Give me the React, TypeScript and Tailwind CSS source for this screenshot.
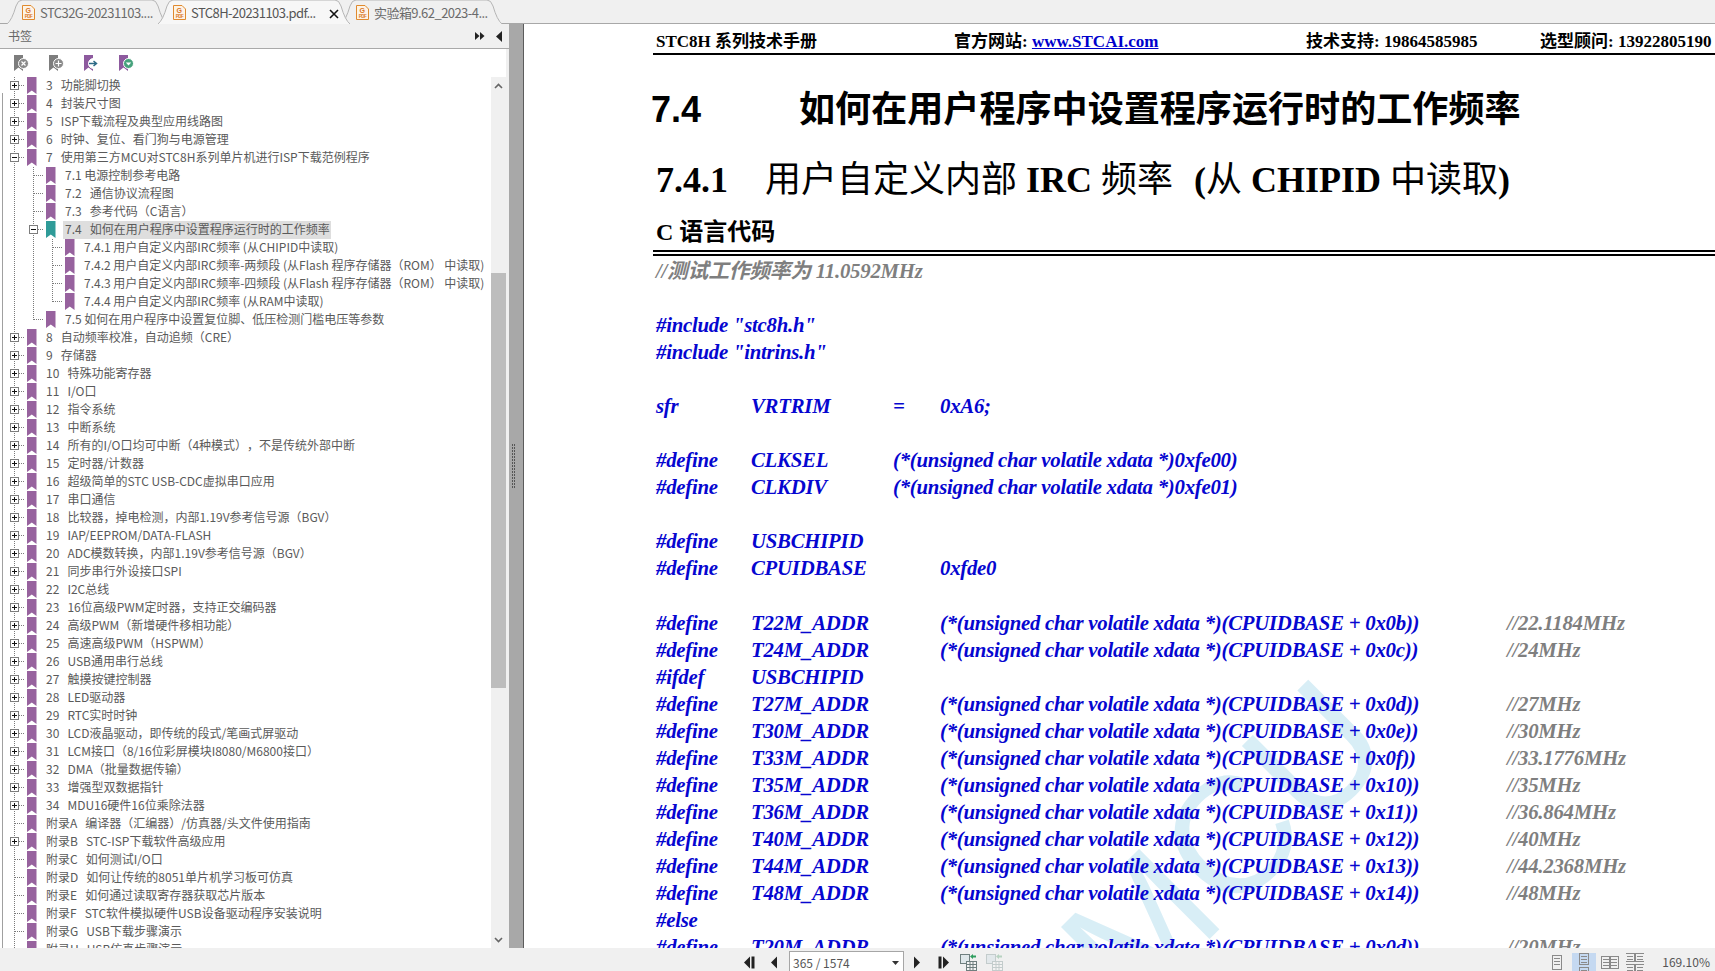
import React from "react";

const uiFont = "font-['Noto_Sans_CJK_SC','Noto_Sans',sans-serif]";
const docFont = "font-['Liberation_Serif','Noto_Sans_CJK_SC',serif]";

type Node = { level: number; text: string; exp?: "+" | "-"; sel?: boolean; last?: boolean };

const top = (text: string, exp: "+" | "-" = "+"): Node => ({ level: 0, text, exp });
const leaf = (text: string): Node => ({ level: 0, text });

const tree: Node[] = [
  top("3   功能脚切换"),
  top("4   封装尺寸图"),
  top("5   ISP下载流程及典型应用线路图"),
  top("6   时钟、复位、看门狗与电源管理"),
  top("7   使用第三方MCU对STC8H系列单片机进行ISP下载范例程序", "-"),
  { level: 1, text: "7.1 电源控制参考电路" },
  { level: 1, text: "7.2   通信协议流程图" },
  { level: 1, text: "7.3   参考代码（C语言）" },
  { level: 1, text: "7.4   如何在用户程序中设置程序运行时的工作频率", exp: "-", sel: true },
  { level: 2, text: "7.4.1 用户自定义内部IRC频率 (从CHIPID中读取)" },
  { level: 2, text: "7.4.2 用户自定义内部IRC频率-两频段 (从Flash 程序存储器（ROM） 中读取)" },
  { level: 2, text: "7.4.3 用户自定义内部IRC频率-四频段 (从Flash 程序存储器（ROM） 中读取)" },
  { level: 2, text: "7.4.4 用户自定义内部IRC频率 (从RAM中读取)", last: true },
  { level: 1, text: "7.5 如何在用户程序中设置复位脚、低压检测门槛电压等参数", last: true },
  top("8   自动频率校准，自动追频（CRE）"),
  top("9   存储器"),
  top("10   特殊功能寄存器"),
  top("11   I/O口"),
  top("12   指令系统"),
  top("13   中断系统"),
  top("14   所有的I/O口均可中断（4种模式），不是传统外部中断"),
  top("15   定时器/计数器"),
  top("16   超级简单的STC USB-CDC虚拟串口应用"),
  top("17   串口通信"),
  top("18   比较器，掉电检测，内部1.19V参考信号源（BGV）"),
  top("19   IAP/EEPROM/DATA-FLASH"),
  top("20   ADC模数转换，内部1.19V参考信号源（BGV）"),
  top("21   同步串行外设接口SPI"),
  top("22   I2C总线"),
  top("23   16位高级PWM定时器，支持正交编码器"),
  top("24   高级PWM（新增硬件移相功能）"),
  top("25   高速高级PWM（HSPWM）"),
  top("26   USB通用串行总线"),
  top("27   触摸按键控制器"),
  top("28   LED驱动器"),
  top("29   RTC实时时钟"),
  top("30   LCD液晶驱动，即传统的段式/笔画式屏驱动"),
  top("31   LCM接口（8/16位彩屏模块I8080/M6800接口）"),
  top("32   DMA（批量数据传输）"),
  top("33   增强型双数据指针"),
  top("34   MDU16硬件16位乘除法器"),
  leaf("附录A   编译器（汇编器）/仿真器/头文件使用指南"),
  top("附录B   STC-ISP下载软件高级应用"),
  leaf("附录C   如何测试I/O口"),
  leaf("附录D   如何让传统的8051单片机学习板可仿真"),
  leaf("附录E   如何通过读取寄存器获取芯片版本"),
  leaf("附录F   STC软件模拟硬件USB设备驱动程序安装说明"),
  leaf("附录G   USB下载步骤演示"),
  leaf("附录H   USB仿真步骤演示"),
];

const expr = (s: string) => `(*(unsigned char volatile xdata *)(CPUIDBASE + ${s}))`;

// kw, name, col3 (starts at "="), col4 (starts at 0x..), comment
type Code = { kw?: string; name?: string; c3?: string; c4?: string; note?: string };
const code: Code[] = [
  { note: "//测试工作频率为 11.0592MHz" },
  {},
  { kw: '#include "stc8h.h"' },
  { kw: '#include "intrins.h"' },
  {},
  { kw: "sfr", name: "VRTRIM", c3: "=", c4: "0xA6;" },
  {},
  { kw: "#define", name: "CLKSEL", c3: "(*(unsigned char volatile xdata *)0xfe00)" },
  { kw: "#define", name: "CLKDIV", c3: "(*(unsigned char volatile xdata *)0xfe01)" },
  {},
  { kw: "#define", name: "USBCHIPID" },
  { kw: "#define", name: "CPUIDBASE", c4: "0xfde0" },
  {},
  { kw: "#define", name: "T22M_ADDR", c4: expr("0x0b"), note: "//22.1184MHz" },
  { kw: "#define", name: "T24M_ADDR", c4: expr("0x0c"), note: "//24MHz" },
  { kw: "#ifdef", name: "USBCHIPID" },
  { kw: "#define", name: "T27M_ADDR", c4: expr("0x0d"), note: "//27MHz" },
  { kw: "#define", name: "T30M_ADDR", c4: expr("0x0e"), note: "//30MHz" },
  { kw: "#define", name: "T33M_ADDR", c4: expr("0x0f"), note: "//33.1776MHz" },
  { kw: "#define", name: "T35M_ADDR", c4: expr("0x10"), note: "//35MHz" },
  { kw: "#define", name: "T36M_ADDR", c4: expr("0x11"), note: "//36.864MHz" },
  { kw: "#define", name: "T40M_ADDR", c4: expr("0x12"), note: "//40MHz" },
  { kw: "#define", name: "T44M_ADDR", c4: expr("0x13"), note: "//44.2368MHz" },
  { kw: "#define", name: "T48M_ADDR", c4: expr("0x14"), note: "//48MHz" },
  { kw: "#else" },
  { kw: "#define", name: "T20M_ADDR", c4: expr("0x0d"), note: "//20MHz" },
];

function PdfIcon() {
  return (
    <svg width="13" height="15" viewBox="0 0 13 15" className="shrink-0">
      <path d="M.5.5H9L12.5 4V14.5H.5Z" fill="#fdf3e6" stroke="#e08a2e" />
      <text x="6" y="7.5" fontSize="7" fontWeight="700" textAnchor="middle" fill="#d9762a" fontFamily="Liberation Sans">G</text>
      <text x="6.5" y="13" fontSize="4.5" fontWeight="700" textAnchor="middle" fill="#d9762a" fontFamily="Liberation Sans">PDF</text>
    </svg>
  );
}

function Tab({ label, width, active, close, offset }: { label: string; width: number; active?: boolean; close?: boolean; offset: number }) {
  return (
    <div style={{ width, marginLeft: offset }} className={`relative flex h-[24px] shrink-0 items-center pl-[15px] text-[13px] leading-none tracking-[-0.55px] ${active ? "z-10 text-[#555]" : "text-[#6b6b6b]"}`}>
      <svg className="absolute inset-0" width={width} height="24" fill="none">
        <path d={`M0 24 Q5 20 9 6 Q11 0 15 0 H${width - 15} Q${width - 11} 0 ${width - 9} 6 Q${width - 5} 20 ${width} 24`} fill={active ? "#f7f7f7" : "#f0f0f0"} stroke="#b5b5b5" />
      </svg>
      <span className="relative flex items-center gap-[5px] whitespace-nowrap">
        <PdfIcon />
        <span>{label}</span>
      </span>
      {close && (
        <svg className="absolute right-[11px] top-[9px]" width="10" height="10" viewBox="0 0 10 10">
          <path d="M1 1L9 9M9 1L1 9" stroke="#111" strokeWidth="1.6" />
        </svg>
      )}
    </div>
  );
}

function Bookmark({ color }: { color: string }) {
  return (
    <svg width="10" height="17" viewBox="0 0 10 17" className="ml-[3px] shrink-0">
      <path d="M0 0H9.5V17L4.8 13.5L0 17Z" fill={color} />
    </svg>
  );
}

function Guide({ kind }: { kind: "line" | "tee" | "elbow" | "plus" | "minus" }) {
  const dots = { stroke: "#7a7a7a", strokeDasharray: "1 1", shapeRendering: "crispEdges" as const };
  return (
    <svg width="19" height="18" className="shrink-0">
      {kind !== "elbow" && <line x1="9.5" y1="0" x2="9.5" y2="18" {...dots} />}
      {kind === "elbow" && <line x1="9.5" y1="0" x2="9.5" y2="9" {...dots} />}
      {kind !== "line" && <line x1="9.5" y1="8.5" x2="22" y2="8.5" {...dots} />}
      {(kind === "plus" || kind === "minus") && (
        <g shapeRendering="crispEdges">
          <rect x="5.5" y="4.5" width="8" height="8" fill="#fff" stroke="#7d7d7d" />
          <line x1="7" y1="8.5" x2="12" y2="8.5" stroke="#111" />
          {kind === "plus" && <line x1="9.5" y1="6" x2="9.5" y2="11" stroke="#111" />}
        </g>
      )}
    </svg>
  );
}

function TreeRow({ node }: { node: Node }) {
  const kind = node.exp === "+" ? "plus" : node.exp === "-" ? "minus" : node.last ? "elbow" : "tee";
  return (
    <div className="flex h-[18px] pl-[5px]">
      {node.level >= 1 && <Guide kind="line" />}
      {node.level >= 2 && <Guide kind="line" />}
      <Guide kind={kind} />
      <Bookmark color={node.sel ? "#2f9b98" : "#97629e"} />
      <span className={`ml-[7px] h-[18px] whitespace-pre pb-[2px] pl-[2px] pr-[1px] text-[12px] leading-[16px] text-[#5a5a5a] [text-spacing-trim:space-all] ${node.sel ? "bg-[#dedede]" : ""}`}>{node.text}</span>
    </div>
  );
}

function ToolIcon({ color, badge, glyph }: { color: string; badge: string; glyph: React.ReactNode }) {
  return (
    <svg width="15" height="17" viewBox="0 0 15 17">
      <path d="M0 0H9V16L4.5 12.5L0 16Z" fill={color} />
      <circle cx="9.5" cy="8.5" r="5" fill={badge} stroke="#fff" />
      {glyph}
    </svg>
  );
}

function PageIcon({ kind }: { kind: "single" | "cont" | "two" | "twoCont" }) {
  const c = { fill: "none", stroke: "#8a8a8a", shapeRendering: "crispEdges" as const };
  const page = (x: number, y: number, h: number) => (
    <g>
      <rect x={x + 0.5} y={y + 0.5} width="9" height={h} {...c} />
      {[3, 6, 9].map((d) => (d < h ? <line key={d} x1={x + 2} x2={x + 8} y1={y + d + 0.5} y2={y + d + 0.5} {...c} /> : null))}
    </g>
  );
  return (
    <svg width={kind === "two" || kind === "twoCont" ? 18 : 12} height="18" className="shrink-0">
      {kind === "single" && page(1, 2, 14)}
      {kind === "cont" && (
        <>
          {page(1, 0, 11)}
          {page(1, 14, 12)}
        </>
      )}
      {kind === "two" && (
        <>
          {page(0, 3, 12)}
          {page(8, 3, 12)}
        </>
      )}
      {kind === "twoCont" && (
        <>
          {page(-1, 0, 8)}
          {page(9, 0, 8)}
          {page(-1, 11, 12)}
          {page(9, 11, 12)}
        </>
      )}
    </svg>
  );
}

function NavIcon({ dir, bar }: { dir: "l" | "r"; bar?: boolean }) {
  const d = dir === "l" ? "M1 7.5L7 1.5V13.5Z" : "M7 7.5L1 1.5V13.5Z";
  return (
    <svg width="12" height="15" viewBox="0 0 12 15" className="shrink-0">
      {bar ? (
        dir === "l" ? (
          <>
            <path d="M0 7.5L6 1.5V13.5Z" fill="#222" />
            <rect x="7.5" y="1.5" width="3" height="12" fill="#222" />
          </>
        ) : (
          <>
            <rect x="0.5" y="1.5" width="3" height="12" fill="#222" />
            <path d="M11 7.5L5 1.5V13.5Z" fill="#222" />
          </>
        )
      ) : (
        <path d={d} fill="#222" transform="translate(2 0)" />
      )}
    </svg>
  );
}

function SheetIcon({ dim }: { dim?: boolean }) {
  const s = dim ? "#b8c4c4" : "#6f7f7f";
  return (
    <svg width="17" height="18" viewBox="0 0 17 18" className="shrink-0" opacity={dim ? 0.8 : 1}>
      <rect x="0.5" y="1.5" width="9" height="9" fill="#dfe7ea" stroke={s} />
      <rect x="6.5" y="8.5" width="10" height="9" fill="#f4f4f4" stroke={s} />
      <path d="M7 11.5H16M7 14.5H16M10 9V17M13 9V17" stroke={s} />
      <path d="M10 3.5L13 1V2.5H16V4.5H13V6Z" fill={dim ? "#a9cbb6" : "#2f9e5f"} />
    </svg>
  );
}

function CodeRow({ row }: { row: Code }) {
  if (row.kw && !row.name) return <div className="whitespace-pre">{row.kw}</div>;
  if (row.note && !row.kw) return <div className="text-[#7f7f7f]">{row.note}</div>;
  return (
    <div className="grid grid-cols-[95px_142px_47px_567px_auto] whitespace-pre">
      <span className="col-start-1 row-start-1">{row.kw}</span>
      <span className="col-start-2 row-start-1">{row.name}</span>
      {row.c3 && <span className={`col-start-3 row-start-1 ${row.c4 ? "" : "col-span-3"}`}>{row.c3}</span>}
      {row.c4 && <span className="col-start-4 row-start-1">{row.c4}</span>}
      {row.note && <span className="col-start-5 row-start-1 text-[#7f7f7f]">{row.note}</span>}
    </div>
  );
}

export default function App() {
  return (
    <div className={`flex h-[971px] w-[1715px] flex-col overflow-hidden bg-[#f0f0f0] ${uiFont}`}>
      {/* tab strip */}
      <div className="flex h-[24px] shrink-0 border-b border-[#a8a8a8] bg-[#f0f0f0]">
        <Tab label="STC32G-20231103...." width={160} offset={7} />
        <Tab label="STC8H-20231103.pdf..." width={192} offset={-9} active close />
        <Tab label="实验箱9.62_2023-4..." width={161} offset={-9} />
      </div>

      <div className="flex min-h-0 flex-1">
        {/* bookmarks panel */}
        <div className="relative flex w-[509px] shrink-0 flex-col">
          <div className="flex h-[25px] shrink-0 items-center border-b border-[#a9a9a9] bg-[#f0f0f0] pl-[8px] text-[12px] text-[#666]">
            <span>书签</span>
            <span className="ml-auto flex items-center">
              <svg width="10" height="10" viewBox="0 0 10 10">
                <path d="M0 1L4.5 5L0 9ZM5 1L9.5 5L5 9Z" fill="#222" />
              </svg>
              <svg className="ml-[11px] mr-[6px]" width="7" height="11" viewBox="0 0 7 11">
                <path d="M6 0V11L0 5.5Z" fill="#222" />
              </svg>
            </span>
          </div>

          <div className="flex h-[28px] w-[506px] shrink-0 items-center gap-[20px] bg-white pl-[14px]">
            <ToolIcon color="#7d7d7d" badge="#8a8a8a" glyph={<path d="M7.5 6.5L11.5 10.5M11.5 6.5L7.5 10.5" stroke="#fff" strokeWidth="1.2" />} />
            <ToolIcon color="#7d7d7d" badge="#8a8a8a" glyph={<path d="M6.5 8.5H12.5M9.5 5.5V11.5" stroke="#fff" strokeWidth="1.2" />} />
            <ToolIcon color="#8d5a9e" badge="#fff" glyph={<path d="M5 8.5H12M9.5 6L12.5 8.5L9.5 11" stroke="#2c6a86" strokeWidth="1.5" fill="none" />} />
            <ToolIcon color="#8d5a9e" badge="#46a27c" glyph={<path d="M6.8 7.5H12.2L9.5 10.5Z" fill="#fff" />} />
          </div>

          <div className="flex min-h-0 w-[506px] flex-1 bg-white">
            <div className="min-w-0 flex-1 overflow-hidden">
              {tree.map((n, i) => (
                <TreeRow key={i} node={n} />
              ))}
            </div>
            {/* scrollbar */}
            <div className="flex w-[15px] shrink-0 flex-col bg-[#f0f0f0]">
              <div className="flex h-[17px] shrink-0 items-center justify-center">
                <svg width="9" height="6" viewBox="0 0 9 6">
                  <path d="M1 5L4.5 1.5L8 5" fill="none" stroke="#666" strokeWidth="1.6" />
                </svg>
              </div>
              <div className="mt-[179px] h-[415px] shrink-0 bg-[#bdbdbd]" />
              <div className="mt-auto flex h-[17px] shrink-0 items-center justify-center">
                <svg width="9" height="6" viewBox="0 0 9 6">
                  <path d="M1 1L4.5 4.5L8 1" fill="none" stroke="#666" strokeWidth="1.6" />
                </svg>
              </div>
            </div>
          </div>
          <div className="absolute bottom-0 left-[2px] top-[69px] w-px bg-[#a0a0a0]" />
        </div>

        {/* splitter */}
        <div className="flex w-[15px] shrink-0 items-center border-r border-[#5c5c5c] bg-[#a8a8a8] pl-[3px]">
          <div className="grid grid-cols-2 gap-x-px gap-y-[1px] pb-[40px]">
            {Array.from({ length: 30 }).map((_, i) => (
              <span key={i} className="h-[2px] w-[1px] bg-[#555]" />
            ))}
          </div>
        </div>

        {/* pdf page */}
        <div className={`relative min-w-0 flex-1 overflow-hidden bg-white ${docFont}`}>
          <div className="pointer-events-none absolute left-[302px] top-[1136px] origin-left -rotate-45 whitespace-nowrap font-['Liberation_Sans'] text-[165px] leading-none text-[#d8eef6]">
            STC MCU
          </div>

          <div className="relative">
            <div className="ml-[129px] grid h-[31px] grid-cols-[298px_352px_234px_auto] items-center border-b-2 border-black pl-[3px] pt-[5px] text-[17px] font-bold leading-none whitespace-nowrap text-black">
              <span>STC8H 系列技术手册</span>
              <span>
                官方网站: <span className="text-[#0000cc] underline">www.STCAI.com</span>
              </span>
              <span>技术支持: 19864585985</span>
              <span>选型顾问: 13922805190</span>
            </div>

            <div className="ml-[127px] mt-[29px] flex h-[52px] items-center font-['Liberation_Sans','Noto_Sans_CJK_SC',sans-serif] text-[36px] font-bold leading-none text-black">
              <span className="w-[148px]">7.4</span>
              <span className="text-[36.1px]">如何在用户程序中设置程序运行时的工作频率</span>
            </div>

            <div className="ml-[132px] mt-[18px] flex h-[52px] items-center text-[36px] font-bold leading-none whitespace-pre text-black">
              <span>7.4.1</span>
              <span className="ml-[37px] font-normal">用户自定义内部</span>
              <span> IRC </span>
              <span className="font-normal">频率</span>
              <span className="ml-[3px]">  (</span>
              <span className="font-normal">从</span>
              <span> CHIPID </span>
              <span className="font-normal">中读取</span>
              <span>)</span>
            </div>

            <div className="ml-[132px] mt-[11px] flex h-[30px] items-center text-[24px] font-bold leading-none text-black">
              C 语言代码
            </div>
            <div className="ml-[129px] mt-[3px] h-[6px] border-y-2 border-black" />

            <div className="ml-[132px] mt-[2px] grid auto-rows-[27.04px] items-center text-[20.8px] font-bold italic leading-none tracking-[-0.25px] text-[#0606d0]">
              {code.map((r, i) => (
                <CodeRow key={i} row={r} />
              ))}
            </div>
          </div>
        </div>
      </div>

      {/* status bar */}
      <div className="relative flex h-[23px] shrink-0 items-center bg-[#f0f0f0] pl-[744px] pt-[5px] text-[12px] text-[#555]">
        <NavIcon dir="l" bar />
        <span className="ml-[12px]">
          <NavIcon dir="l" />
        </span>
        <div className="ml-[9px] flex h-[20px] w-[115px] items-center self-end border border-b-0 border-[#a6a6a6] bg-white pl-[3px] pt-[2px]">
          <span>365 / 1574</span>
          <svg className="ml-auto mr-[4px]" width="7" height="4" viewBox="0 0 7 4">
            <path d="M0 0H7L3.5 4Z" fill="#333" />
          </svg>
        </div>
        <span className="ml-[7px]">
          <NavIcon dir="r" />
        </span>
        <span className="ml-[15px]">
          <NavIcon dir="r" bar />
        </span>
        <span className="ml-[10px]">
          <SheetIcon />
        </span>
        <span className="ml-[9px]">
          <SheetIcon dim />
        </span>
        <div className="ml-auto flex items-center pr-[5px]">
          <PageIcon kind="single" />
          <span className="ml-[9px] flex h-[18px] w-[24px] items-start justify-center bg-[#c5d9f1]">
            <PageIcon kind="cont" />
          </span>
          <span className="ml-[5px]">
            <PageIcon kind="two" />
          </span>
          <span className="ml-[7px]">
            <PageIcon kind="twoCont" />
          </span>
          <span className="ml-[18px]">169.10%</span>
        </div>
      </div>
    </div>
  );
}
